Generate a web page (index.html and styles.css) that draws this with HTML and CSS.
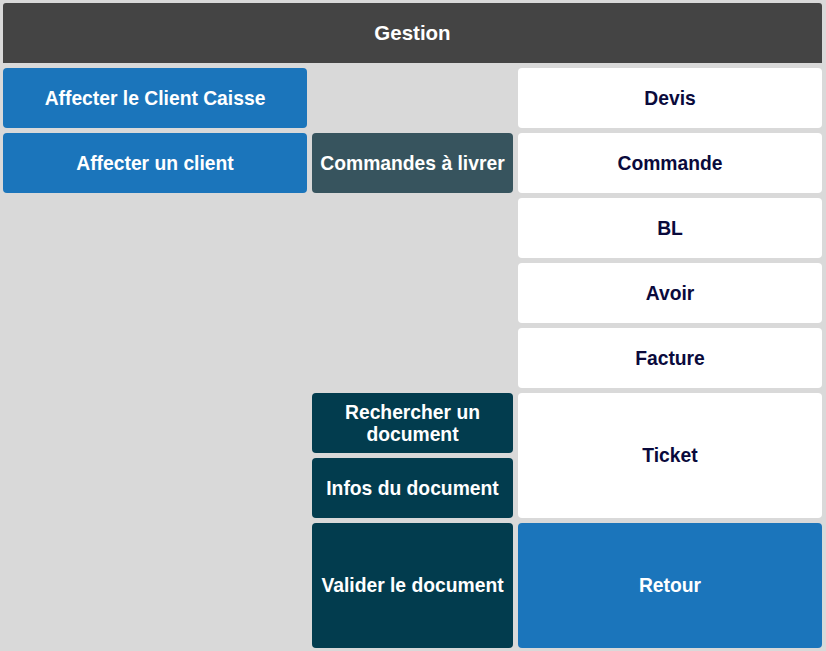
FILE: index.html
```html
<!DOCTYPE html>
<html lang="fr">
<head>
    <meta charset="UTF-8">
    <meta name="viewport" content="width=device-width, initial-scale=1.0">
    <title>Gestion</title>
    <link rel="stylesheet" href="styles.css">
</head>
<body>

<div class="page">
    <div class="header">Gestion</div>

    <div class="grid">
        <button class="btn blue c1 r1">Affecter le Client Caisse</button>
        <button class="btn white c3 r1">Devis</button>

        <button class="btn blue c1 r2">Affecter un client</button>
        <button class="btn slate c2 r2">Commandes à livrer</button>
        <button class="btn white c3 r2">Commande</button>

        <button class="btn white c3 r3">BL</button>
        <button class="btn white c3 r4">Avoir</button>
        <button class="btn white c3 r5">Facture</button>

        <button class="btn teal c2 r6">Rechercher un document</button>
        <button class="btn white c3 r6 span2">Ticket</button>
        <button class="btn teal c2 r7">Infos du document</button>

        <button class="btn teal c2 r8 span2">Valider le document</button>
        <button class="btn blue c3 r8 span2">Retour</button>
    </div>
</div>

</body>
</html>
```

FILE: styles.css
```css
body {
    margin: 0;
    padding: 0;
    background: #d9d9d9;
    font-family: "Liberation Sans", Arial, sans-serif;
}
.page {
    padding: 3px 4px 3px 3px;
}
.header {
    background: #444444;
    color: white;
    height: 60px;
    line-height: 60px;
    text-align: center;
    font-size: 20.5px;
    font-weight: bold;
    border-radius: 3px 3px 0 0;
    margin-bottom: 5px;
}
.grid {
    display: grid;
    grid-template-columns: 304px 201px 304px;
    grid-template-rows: repeat(9, 60px);
    gap: 5px;
}
.btn {
    border: none;
    border-radius: 4px;
    font-family: inherit;
    font-size: 19.3px;
    font-weight: bold;
    line-height: 22px;
    padding: 1px 3px 0;
    text-align: center;
    cursor: pointer;
}
.blue {
    background: #1b75bb;
    color: white;
}
.white {
    background: white;
    color: #0a0a3c;
}
.slate {
    background: #37545e;
    color: white;
}
.teal {
    background: #023c4e;
    color: white;
}
.c1 { grid-column: 1; }
.c2 { grid-column: 2; }
.c3 { grid-column: 3; }
.r1 { grid-row: 1; }
.r2 { grid-row: 2; }
.r3 { grid-row: 3; }
.r4 { grid-row: 4; }
.r5 { grid-row: 5; }
.r6 { grid-row: 6; }
.r7 { grid-row: 7; }
.r8 { grid-row: 8; }
.span2 { grid-row-end: span 2; }
```
